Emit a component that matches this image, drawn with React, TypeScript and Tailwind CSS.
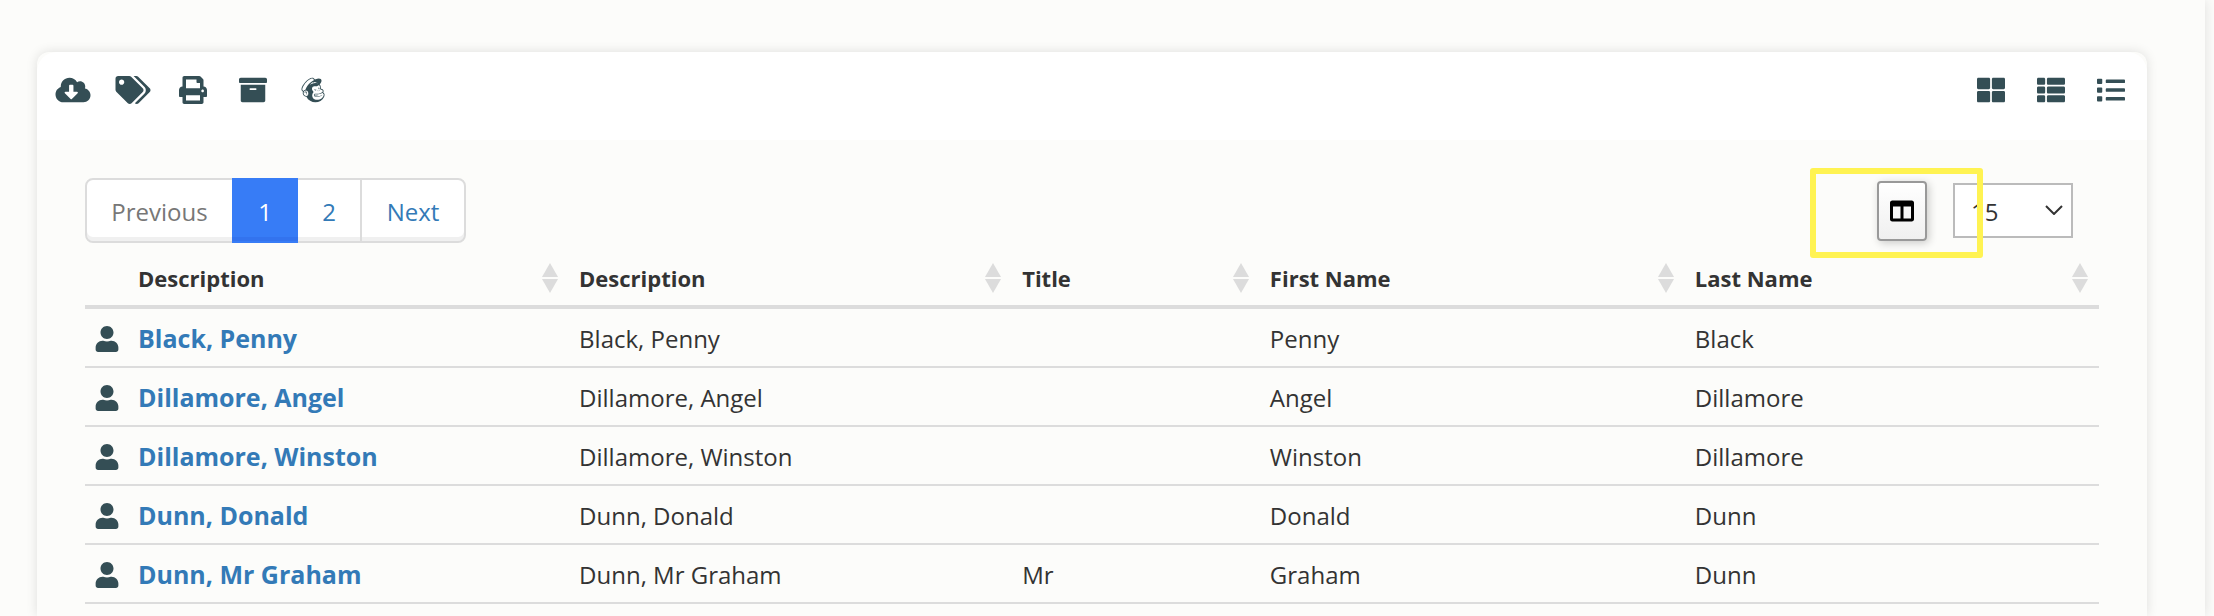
import type { IconType } from 'react-icons'
import {
  FaArchive,
  FaCloudDownloadAlt,
  FaColumns,
  FaList,
  FaMailchimp,
  FaPrint,
  FaTags,
  FaThLarge,
  FaThList,
  FaUser,
} from 'react-icons/fa'

const actions: { label: string; Icon: IconType }[] = [
  { label: 'Download', Icon: FaCloudDownloadAlt },
  { label: 'Tags', Icon: FaTags },
  { label: 'Print', Icon: FaPrint },
  { label: 'Archive', Icon: FaArchive },
  { label: 'Mailchimp', Icon: FaMailchimp },
]

const views: { label: string; Icon: IconType }[] = [
  { label: 'Grid view', Icon: FaThLarge },
  { label: 'Table view', Icon: FaThList },
  { label: 'List view', Icon: FaList },
]

const columns = [
  { label: 'Description', width: 'w-[21.9%]' },
  { label: 'Description', width: 'w-[22%]' },
  { label: 'Title', width: 'w-[12.3%]' },
  { label: 'First Name', width: 'w-[21.1%]' },
  { label: 'Last Name', width: '' },
]

const people = [
  { name: 'Black, Penny', title: '', first: 'Penny', last: 'Black' },
  { name: 'Dillamore, Angel', title: '', first: 'Angel', last: 'Dillamore' },
  { name: 'Dillamore, Winston', title: '', first: 'Winston', last: 'Dillamore' },
  { name: 'Dunn, Donald', title: '', first: 'Donald', last: 'Dunn' },
  { name: 'Dunn, Mr Graham', title: 'Mr', first: 'Graham', last: 'Dunn' },
]

function IconBar({ items }: { items: { label: string; Icon: IconType }[] }) {
  return (
    <div className="flex gap-6">
      {items.map(({ label, Icon }) => (
        <button key={label} type="button" aria-label={label}>
          <Icon className="h-7 w-9" />
        </button>
      ))}
    </div>
  )
}

function SortIcon() {
  return (
    <svg viewBox="0 0 16 30" className="h-[30px] w-4 shrink-0" fill="#dcdcdc" aria-hidden="true">
      <path d="M8 0l8 14H0z" />
      <path d="M8 30l8-14H0z" />
    </svg>
  )
}

function Pagination() {
  return (
    <nav
      aria-label="Pages"
      className="flex h-[65px] rounded-lg border-2 border-[#dcdcdc] bg-white text-2xl text-[#337ab7] shadow-[inset_0_-4px_0_#f0f0f0]"
    >
      <button type="button" disabled className="w-[145px] pt-0.5 text-[#777]">
        Previous
      </button>
      <button
        type="button"
        aria-current="page"
        className="-my-0.5 w-[66px] bg-[#377cf6] pt-0.5 text-white shadow-[inset_0_-2px_0_#377cf6,inset_0_-6px_0_#3373ee]"
      >
        1
      </button>
      <button type="button" className="w-16 border-r-2 border-[#dcdcdc] pt-0.5">
        2
      </button>
      <button type="button" className="w-[102px] pt-0.5">
        Next
      </button>
    </nav>
  )
}

function TableControls() {
  return (
    <div className="relative mr-[26px] flex items-center gap-[26px]">
      <button
        type="button"
        aria-label="Choose columns"
        className="flex h-[60px] w-[50px] items-center justify-center rounded border-2 border-[#999] bg-linear-to-b from-white to-[#f0f0f0] text-black shadow-[2px_2px_8px_rgba(0,0,0,0.2)]"
      >
        <FaColumns className="size-6" />
      </button>
      <div className="relative">
        <select
          aria-label="Rows per page"
          defaultValue="15"
          className="h-[55px] w-[120px] appearance-none border-2 border-[#bbb] bg-white pt-0.5 pl-4 text-2xl text-[#333]"
        >
          <option>15</option>
          <option>30</option>
          <option>50</option>
        </select>
        <svg
          viewBox="0 0 18 10"
          className="pointer-events-none absolute top-[22px] right-2.5 h-2.5 w-[18px]"
          fill="none"
          stroke="#333"
          strokeWidth="2"
          aria-hidden="true"
        >
          <path d="M1 1l8 8 8-8" />
        </svg>
      </div>
      {/* highlighter box around the column picker */}
      <div className="pointer-events-none absolute -top-[13px] right-[90px] h-[90px] w-[173px] rounded-[3px] border-[6px] border-[#fff352]" />
    </div>
  )
}

export default function App() {
  return (
    <div className="h-screen overflow-hidden bg-[#fcfcfa] pr-[9px] font-['Open_Sans',sans-serif] text-[#333]">
      <div className="flex h-full flex-col pt-[52px] pr-[58px] pl-[37px] shadow-[0_0_12px_rgba(0,0,0,0.12)]">
        <main className="flex-1 rounded-t-xl bg-[#fcfcfa] shadow-[0_0_12px_rgba(0,0,0,0.12)]">
          <header className="flex h-[88px] items-start justify-between rounded-t-[20px] bg-white px-[18px] pt-6 text-[#344e55]">
            <IconBar items={actions} />
            <IconBar items={views} />
          </header>

          <section className="px-12 pt-[38px]">
            <div className="flex items-center justify-between">
              <Pagination />
              <TableControls />
            </div>

            <table className="w-full table-fixed border-separate border-spacing-0 text-left text-2xl">
              <thead>
                <tr className="h-[66px] *:border-b-4 *:border-[#dcdcdc]">
                  <td className="w-[43px]" />
                  {columns.map((col, i) => (
                    <th key={i} scope="col" className={`${col.width} pt-2 pr-[11px] pl-2.5 text-[22px] font-bold`}>
                      <div className="flex items-center justify-between">
                        <span className="pt-0.5">{col.label}</span>
                        <SortIcon />
                      </div>
                    </th>
                  ))}
                </tr>
              </thead>
              <tbody>
                {people.map((person) => (
                  <tr key={person.name} className="h-[59px] *:border-b-2 *:border-[#dcdcdc] *:pt-0.5">
                    <td className="pl-[9px]">
                      <FaUser className="size-[26px] text-[#344e55]" />
                    </td>
                    <td className="px-2.5 text-[25px] font-bold">
                      <a href="#" className="text-[#337ab7]">
                        {person.name}
                      </a>
                    </td>
                    <td className="px-2.5">{person.name}</td>
                    <td className="px-2.5">{person.title}</td>
                    <td className="px-2.5">{person.first}</td>
                    <td className="px-2.5">{person.last}</td>
                  </tr>
                ))}
              </tbody>
            </table>
          </section>
        </main>
      </div>
    </div>
  )
}
